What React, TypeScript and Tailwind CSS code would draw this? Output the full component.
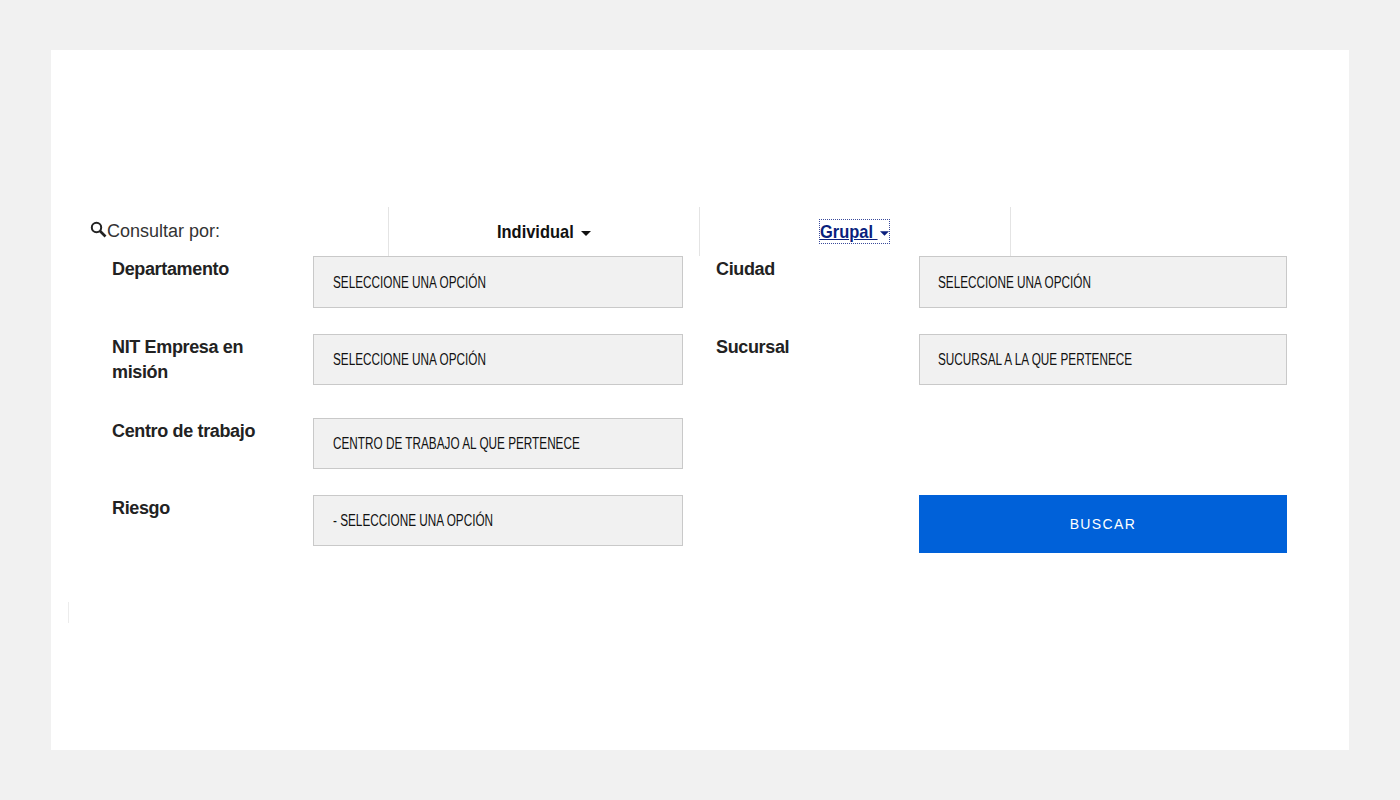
import React from "react";

const sans = "font-['Liberation_Sans',sans-serif]";

function Caret({ className }: { className: string }) {
  return (
    <svg width="10" height="5" viewBox="0 0 10 5" className={className}>
      <path d="M0 0h10L5 5z" fill="currentColor" />
    </svg>
  );
}

function Field({ children, h = "h-[51px]", pl = "pl-[19px]" }: { children: React.ReactNode; h?: string; pl?: string }) {
  return (
    <div className={`${h} ${pl} flex items-center bg-[#f1f1f1] border border-[#c9c9c9] pt-[1px] text-[16px] text-[#111] ${sans}`}>
      <span className="inline-block origin-left scale-x-[0.735] whitespace-nowrap">{children}</span>
    </div>
  );
}

function Label({ children }: { children: React.ReactNode }) {
  return (
    <div className={`w-[150px] pt-[1px] text-[18px] leading-[25px] font-bold text-[#222] tracking-[-0.35px] ${sans}`}>
      {children}
    </div>
  );
}

export default function App() {
  return (
    <div className="min-h-[800px] bg-[#f1f1f1] px-[51px] py-[50px]">
      <div className={`relative h-[700px] w-[1298px] bg-white pt-[157px] ${sans}`}>
        <div className="flex h-[49px]">
          <div className="ml-[39px] flex w-[299px] items-center border-r border-[#e4e4e4]">
            <svg width="17" height="17" viewBox="0 0 17 17" className="mb-[5px] text-[#222]">
              <circle cx="6.5" cy="6.5" r="4.7" fill="none" stroke="currentColor" strokeWidth="2" />
              <path d="M10 10l5.5 5.5" stroke="currentColor" strokeWidth="2.6" />
            </svg>
            <span className="text-[18px] text-[#333]">Consultar por:</span>
          </div>
          <div className="flex w-[311px] items-center justify-center border-r border-[#e4e4e4] pt-[1px]">
            <span className="inline-block w-[77px] origin-left scale-x-[0.865] whitespace-nowrap text-[19px] font-bold text-[#111]">Individual</span>
            <Caret className="ml-[7px] mt-[2px] text-[#111]" />
          </div>
          <div className="flex w-[311px] items-center justify-center border-r border-[#e4e4e4] pr-[2px]">
            <a href="#" className="flex h-[25px] w-[71px] items-center border border-dotted border-[#3a4a9a] pt-[1px] text-[19px] font-bold text-[#0a1f7d]">
              <span className="inline-block w-[58px] origin-left scale-x-[0.865] whitespace-pre underline">Grupal </span>
              <Caret className="ml-[2px] mt-[2px]" />
            </a>
          </div>
        </div>

        <div className="ml-[61px] grid grid-cols-[201px_370px_33px_203px_368px] grid-rows-[52px_51px_51px_58px]">
          <Label>Departamento</Label>
          <Field h="h-[52px]">SELECCIONE UNA OPCIÓN</Field>
          <div />
          <Label>Ciudad</Label>
          <Field h="h-[52px]" pl="pl-[18px]">SELECCIONE UNA OPCIÓN</Field>

          <div className="col-span-5 mt-[26px] grid grid-cols-subgrid">
            <Label>NIT Empresa en misión</Label>
            <Field>SELECCIONE UNA OPCIÓN</Field>
            <div />
            <Label>Sucursal</Label>
            <Field pl="pl-[18px]">SUCURSAL A LA QUE PERTENECE</Field>
          </div>
          <div className="col-span-5 mt-[59px] grid grid-cols-subgrid">
            <Label>Centro de trabajo</Label>
            <Field>CENTRO DE TRABAJO AL QUE PERTENECE</Field>
          </div>
          <div className="col-span-5 mt-[85px] grid grid-cols-subgrid">
            <Label>Riesgo</Label>
            <Field>- SELECCIONE UNA OPCIÓN</Field>
            <div />
            <div />
            <button className="h-[58px] bg-[#0061d9] text-[14px] tracking-[1.4px] text-white">BUSCAR</button>
          </div>
        </div>

        <div className="absolute left-[17px] top-[552px] h-[21px] w-px bg-[#ececec]" />
      </div>
    </div>
  );
}
